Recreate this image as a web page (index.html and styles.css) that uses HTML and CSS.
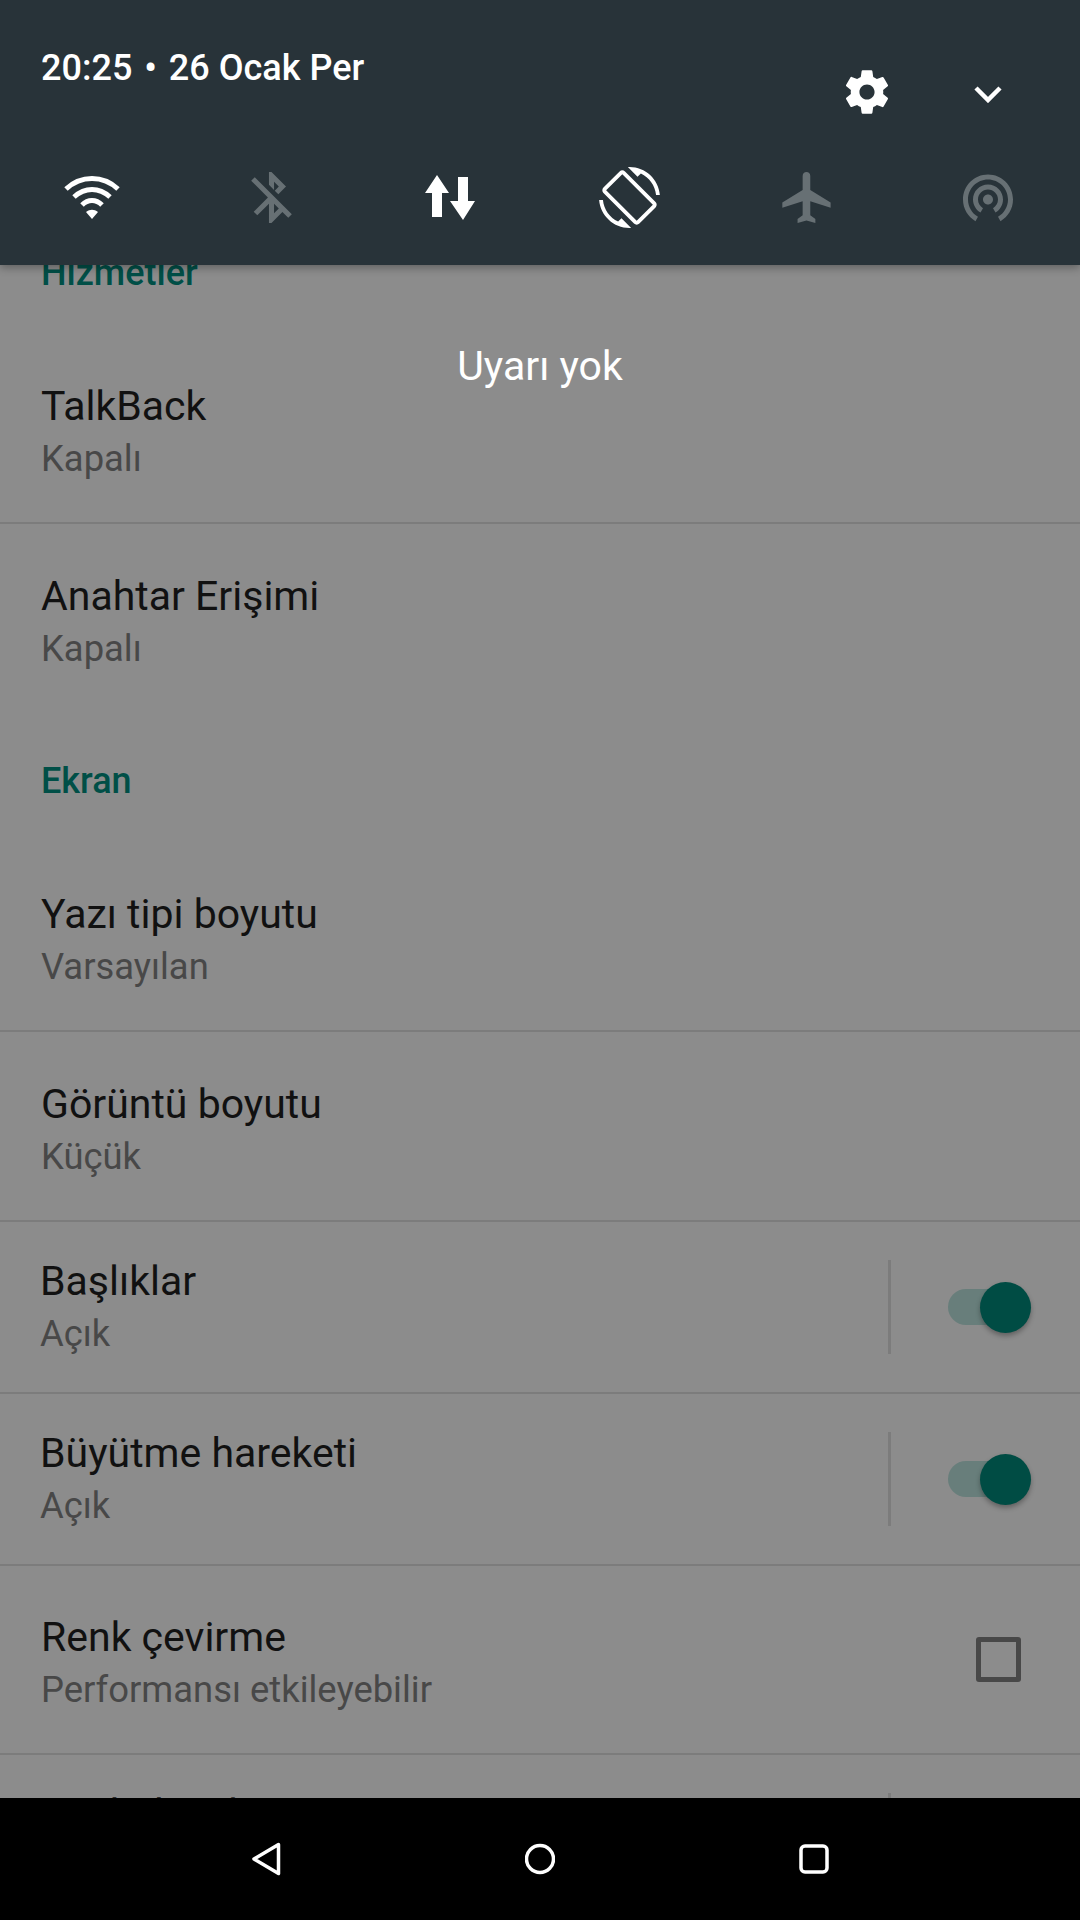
FILE: index.html
```html
<!DOCTYPE html>
<html lang="tr">
<head>
    <meta charset="UTF-8">
    <meta name="viewport" content="width=device-width, initial-scale=1.0">
    <title>Erişilebilirlik</title>
    <link rel="stylesheet" href="styles.css">
</head>
<body>

    <header class="shade">
        <div class="shade-top">
            <div class="clock">20:25 <span class="dot">•</span> 26 Ocak Per</div>
            <div class="shade-actions">
                <svg class="gear" viewBox="0 0 24 24"><path d="M19.43 12.98c.04-.32.07-.64.07-.98s-.03-.66-.07-.98l2.11-1.65c.19-.15.24-.42.12-.64l-2-3.46c-.12-.22-.39-.3-.61-.22l-2.49 1c-.52-.4-1.08-.73-1.69-.98l-.38-2.65C14.46 2.18 14.25 2 14 2h-4c-.25 0-.46.18-.49.42l-.38 2.65c-.61.25-1.17.59-1.69.98l-2.49-1c-.23-.09-.49 0-.61.22l-2 3.46c-.13.22-.07.49.12.64l2.11 1.65c-.04.32-.07.65-.07.98s.03.66.07.98l-2.11 1.65c-.19.15-.24.42-.12.64l2 3.46c.12.22.39.3.61.22l2.49-1c.52.4 1.08.73 1.69.98l.38 2.65c.03.24.24.42.49.42h4c.25 0 .46-.18.49-.42l.38-2.65c.61-.25 1.17-.59 1.69-.98l2.49 1c.23.09.49 0 .61-.22l2-3.46c.12-.22.07-.49-.12-.64l-2.11-1.65zM12 15.5c-1.93 0-3.5-1.57-3.5-3.5s1.57-3.5 3.5-3.5 3.5 1.57 3.5 3.5-1.57 3.5-3.5 3.5z"/></svg>
                <svg class="chevron" viewBox="0 0 28 18"><path d="M2 3l12 12L26 3"/></svg>
            </div>
        </div>
        <div class="tiles">
            <div class="tile">
                <svg class="wifi" viewBox="0 0 56 46">
                    <path d="M2 15C17 1 39 1 54 15"/>
                    <path d="M10 23C21 13 35 13 46 23"/>
                    <path d="M18 31C24 25 32 25 38 31"/>
                    <path class="wifi-tip" d="M22 38c4-3 8-3 12 0l-6 7z"/>
                </svg>
            </div>
            <div class="tile off">
                <svg class="icon61" viewBox="0 0 24 24"><path d="M13 5.83l1.88 1.88-1.6 1.6 1.41 1.41 3.02-3.02L12 2h-1v5.03l2 2v-3.2zM5.41 4L4 5.41 10.59 12 5 17.59 6.41 19 11 14.41V22h1l4.29-4.29 2.3 2.29L20 18.59 5.41 4zM13 18.17v-3.76l1.88 1.88L13 18.17z"/></svg>
            </div>
            <div class="tile">
                <svg class="arrows" viewBox="0 0 50 45"><path d="M0 18L12 0l12 18h-7v24H7V18zM33 2h10v24h7L38 45 25 26h8z"/></svg>
            </div>
            <div class="tile">
                <svg class="icon61" viewBox="0 0 24 24"><path d="M16.48 2.52c3.27 1.55 5.61 4.72 5.97 8.48h1.5C23.44 4.84 18.29 0 12 0l-.66.03 3.81 3.81 1.33-1.32zm-6.25-.77c-.59-.59-1.54-.59-2.12 0L1.75 8.11c-.59.59-.59 1.54 0 2.12l12.02 12.02c.59.59 1.54.59 2.12 0l6.36-6.36c.59-.59.59-1.54 0-2.12L10.23 1.75zm4.6 19.44L2.81 9.17l6.36-6.36 12.02 12.02-6.36 6.36zm-7.31.29C4.25 19.94 1.91 16.76 1.55 13H.05C.56 19.16 5.71 24 12 24l.66-.03-3.81-3.81-1.33 1.32z"/></svg>
            </div>
            <div class="tile off">
                <svg class="icon61" viewBox="0.8 0 23 24"><path d="M21 16v-2l-8-5V3.5c0-.83-.67-1.5-1.5-1.5S10 2.67 10 3.5V9l-8 5v2l8-2.5V19l-2 1.5V22l3.5-1 3.5 1v-1.5L13 19v-5.5l8 2.5z"/></svg>
            </div>
            <div class="tile off">
                <svg class="icon60" viewBox="0 0 24 24"><path d="M12 11c-1.1 0-2 .9-2 2s.9 2 2 2 2-.9 2-2-.9-2-2-2zm6 2c0-3.31-2.69-6-6-6s-6 2.69-6 6c0 2.22 1.21 4.15 3 5.19l1-1.74c-1.19-.7-2-1.97-2-3.45 0-2.21 1.79-4 4-4s4 1.79 4 4c0 1.48-.81 2.75-2 3.45l1 1.74c1.79-1.04 3-2.97 3-5.19zM12 3C6.48 3 2 7.48 2 13c0 3.7 2.01 6.92 4.99 8.65l1-1.73C5.61 18.53 4 15.96 4 13c0-4.42 3.58-8 8-8s8 3.58 8 8c0 2.96-1.61 5.53-4 6.92l1 1.73c2.99-1.73 5-4.95 5-8.65 0-5.52-4.48-10-10-10z"/></svg>
            </div>
        </div>
    </header>

    <main class="content">
        <div class="no-alerts">Uyarı yok</div>

        <div class="list">
            <div class="section">Hizmetler</div>
            <div class="row line">
                <div class="row-title">TalkBack</div>
                <div class="row-sub">Kapalı</div>
            </div>
            <div class="row">
                <div class="row-title">Anahtar Erişimi</div>
                <div class="row-sub">Kapalı</div>
            </div>

            <div class="section">Ekran</div>
            <div class="row line">
                <div class="row-title">Yazı tipi boyutu</div>
                <div class="row-sub">Varsayılan</div>
            </div>
            <div class="row line">
                <div class="row-title">Görüntü boyutu</div>
                <div class="row-sub">Küçük</div>
            </div>

            <div class="row-switch line">
                <div>
                    <div class="row-title">Başlıklar</div>
                    <div class="row-sub">Açık</div>
                </div>
                <div class="sep"></div>
                <div class="switch"><div class="thumb"></div></div>
            </div>
            <div class="row-switch line">
                <div>
                    <div class="row-title">Büyütme hareketi</div>
                    <div class="row-sub">Açık</div>
                </div>
                <div class="sep"></div>
                <div class="switch"><div class="thumb"></div></div>
            </div>

            <div class="row row-check line">
                <div>
                    <div class="row-title">Renk çevirme</div>
                    <div class="row-sub">Performansı etkileyebilir</div>
                </div>
                <div class="checkbox"></div>
            </div>
            <div class="row-switch">
                <div>
                    <div class="row-title">Renk düzeltme</div>
                    <div class="row-sub">Kapalı</div>
                </div>
                <div class="sep"></div>
                <div class="switch"><div class="thumb"></div></div>
            </div>
        </div>
    </main>

    <nav class="navbar">
        <svg class="nav-icon" viewBox="0 0 30 34"><path d="M27.5 2.5L3 17l24.500 14.500z"/></svg>
        <svg class="nav-icon" viewBox="0 0 30 34"><circle cx="15" cy="17" r="13.500"/></svg>
        <svg class="nav-icon" viewBox="0 0 30 34"><rect x="2" y="4" width="26" height="26" rx="4"/></svg>
    </nav>

</body>
</html>
```

FILE: styles.css
```css
*{
    margin: 0;padding:0;
    box-sizing: border-box;
}

body{
    width:1080px;
    height:1920px;
    display:flex;
    flex-direction: column;
    overflow:hidden;
    background:#8c8c8c;
    font-family: Roboto, "Noto Sans", sans-serif;
}

/* notification shade */
.shade{
    height:265px;
    flex-shrink:0;
    background:#283339;
    box-shadow: 0 3px 8px rgba(0, 0, 0, 0.3);
    position:relative;
    z-index:2;
    padding:0 41px;
}

.shade-top{
    height:152px;
    display:flex;
    justify-content:space-between;
}

.clock{
    margin-top:46px;
    color:white;
    font-size:36px;
    font-weight:500;
    line-height:44px;
}

.dot{
    margin:0 3px;
}

.shade-actions{
    display:flex;
    align-items:flex-start;
    padding-top:66px;
    margin-right:37px;
    gap:81px;
}

.gear{
    width:52px;
    height:52px;
    fill:white;
}

.chevron{
    width:28px;
    height:18px;
    margin-top:19px;
    fill:none;
    stroke:white;
    stroke-width:4.5;
}

.tiles{
    display:flex;
    justify-content:space-between;
    margin:0 -41px;
    padding:0 32px 0 32px;
}

.tile{
    width:120px;
    height:90px;
    display:flex;
    justify-content:center;
    align-items:center;
    fill:white;
}

.tile.off{
    fill:#677074;
}

.icon61{
    width:61px;
    height:61px;
}

.icon60{
    width:60px;
    height:60px;
}

.arrows{
    width:50px;
    height:45px;
}

.wifi{
    width:56px;
    height:46px;
    fill:none;
    stroke:white;
    stroke-width:5;
}

.wifi-tip{
    fill:white;
    stroke:none;
}

/* settings list, dimmed by the shade */
.content{
    flex:1;
    position:relative;
    overflow:hidden;
}

.no-alerts{
    position:absolute;
    top:77px;
    left:0;
    width:100%;
    text-align:center;
    color:white;
    font-size:41px;
    line-height:48px;
}

.list{
    margin-top:-59px;
}

.section{
    height:128px;
    padding:46px 41px 0;
    color:#004f47;
    font-size:36px;
    font-weight:500;
    line-height:42px;
}

.row{
    height:190px;
    padding:45px 41px 0;
}

.row-check{
    height:189px;
    display:flex;
    justify-content:space-between;
    padding-top:44px;
    padding-right:59px;
}

.row-switch{
    height:172px;
    padding:32px 60px 0 40px;
    display:flex;
    align-items:flex-start;
}

.line{
    border-bottom:2px solid #7c7c7c;
}

.row-title{
    color:#111;
    font-size:41px;
    line-height:54px;
}

.row-sub{
    color:#484848;
    font-size:36.400px;
    line-height:52px;
}

.sep{
    width:3px;
    height:94px;
    margin:6px 0 0 auto;
    background:#7c7c7c;
}

.switch{
    width:72px;
    height:36px;
    margin:35px 0 0 57px;
    background:#687e7b;
    border-radius:18px;
    position:relative;
}

.thumb{
    position:absolute;
    top:-7px;
    right:-11px;
    width:51px;
    height:51px;
    border-radius:50%;
    background:#004c44;
    box-shadow: 0 3px 5px rgba(0, 0, 0, 0.3);
}

.checkbox{
    width:45px;
    height:45px;
    margin-top:27px;
    border:5px solid #484848;
    border-radius:3px;
}

/* system nav */
.navbar{
    height:122px;
    flex-shrink:0;
    background:black;
    position:relative;
    z-index:2;
    display:flex;
    justify-content:center;
    align-items:center;
    gap:244px;
}

.nav-icon{
    width:30px;
    height:34px;
    fill:none;
    stroke:white;
    stroke-width:3.500;
    stroke-linejoin:round;
}
```
